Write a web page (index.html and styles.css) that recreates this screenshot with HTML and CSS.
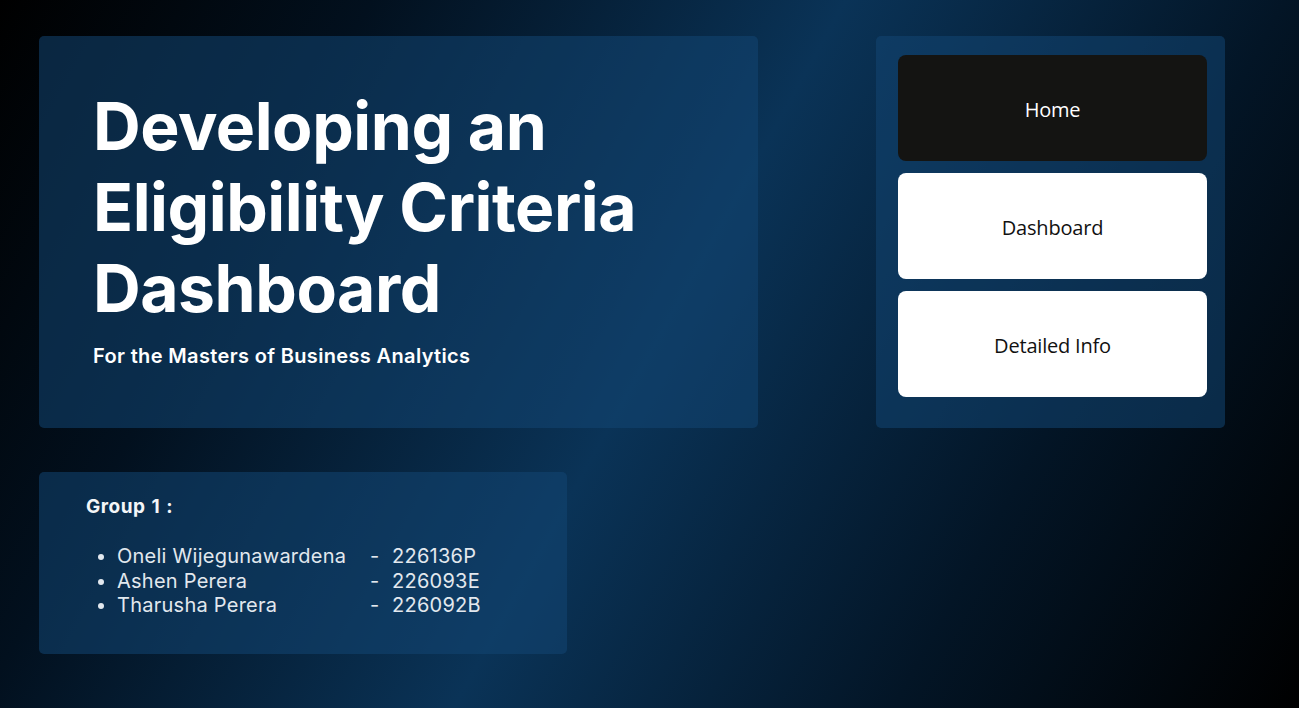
FILE: index.html
```html
<!DOCTYPE html>
<html lang="en">
<head>
<meta charset="utf-8">
<title>Eligibility Criteria Dashboard</title>
<link rel="stylesheet" href="styles.css">
</head>
<body>
<main class="page">
  <div class="top-row">
    <section class="panel hero">
      <h1 class="hero-title">Developing an<br>Eligibility Criteria<br>Dashboard</h1>
      <p class="hero-sub">For the Masters of Business Analytics</p>
    </section>
    <nav class="panel nav">
      <a class="nav-btn active" href="#">Home</a>
      <a class="nav-btn" href="#">Dashboard</a>
      <a class="nav-btn" href="#">Detailed Info</a>
    </nav>
  </div>
  <section class="panel group">
    <h2 class="group-title">Group 1 :</h2>
    <ul class="members">
      <li><span class="name">Oneli Wijegunawardena</span><span class="dash">-</span><span class="id">226136P</span></li>
      <li><span class="name">Ashen Perera</span><span class="dash">-</span><span class="id">226093E</span></li>
      <li><span class="name">Tharusha Perera</span><span class="dash">-</span><span class="id">226092B</span></li>
    </ul>
  </section>
</main>
</body>
</html>
```
FILE: styles.css
```css
html, body {
  margin: 0;
  height: 100%;
}
body {
  background: linear-gradient(119deg, #000000 0%, #02101e 22%, #0a3357 50%, #031526 76%, #000000 100%);
  font-family: Inter, "Liberation Sans", sans-serif;
  color: #ffffff;
  overflow: hidden;
}
.page {
  padding: 36px 39px;
  display: flex;
  flex-direction: column;
  gap: 44px;
}
.top-row {
  display: flex;
  gap: 118px;
  align-items: stretch;
}
.panel {
  background: rgba(18, 69, 114, 0.55);
  border-radius: 5px;
  box-sizing: border-box;
}
.hero {
  width: 719px;
  height: 392px;
  padding: 50px 40px 0 54px;
}
.hero-title {
  margin: 0;
  font-size: 66px;
  line-height: 81px;
  font-weight: 700;
  letter-spacing: -0.45px;
}
.hero-sub {
  margin: 15px 0 0;
  font-size: 20px;
  line-height: 24px;
  font-weight: 600;
  letter-spacing: 0.35px;
}
.nav {
  width: 349px;
  height: 392px;
  padding: 19px 18px 31px 22px;
  display: flex;
  flex-direction: column;
  gap: 12px;
}
.nav-btn {
  flex: 1;
  display: flex;
  align-items: center;
  justify-content: center;
  padding-top: 3px;
  background: #ffffff;
  color: #111111;
  border-radius: 8px;
  text-decoration: none;
  font-family: "Open Sans", "Noto Sans", sans-serif;
  font-size: 20px;
  letter-spacing: -0.2px;
}
.nav-btn.active {
  background: #141412;
  color: #ffffff;
}
.group {
  width: 528px;
  height: 182px;
  padding: 23px 20px 0 47px;
}
.group-title {
  margin: 0;
  font-size: 19px;
  line-height: 24px;
  font-weight: 700;
  letter-spacing: 0.5px;
  word-spacing: 1px;
  color: #f4f6f8;
}
.members {
  margin: 25px 0 0;
  padding-left: 31px;
  font-size: 20px;
  line-height: 24.5px;
  letter-spacing: 0.25px;
  color: #e2e8ee;
}
.members li {
  list-style: disc;
}
.name {
  display: inline-block;
  width: 253px;
}
.dash {
  display: inline-block;
  width: 22px;
}
```
